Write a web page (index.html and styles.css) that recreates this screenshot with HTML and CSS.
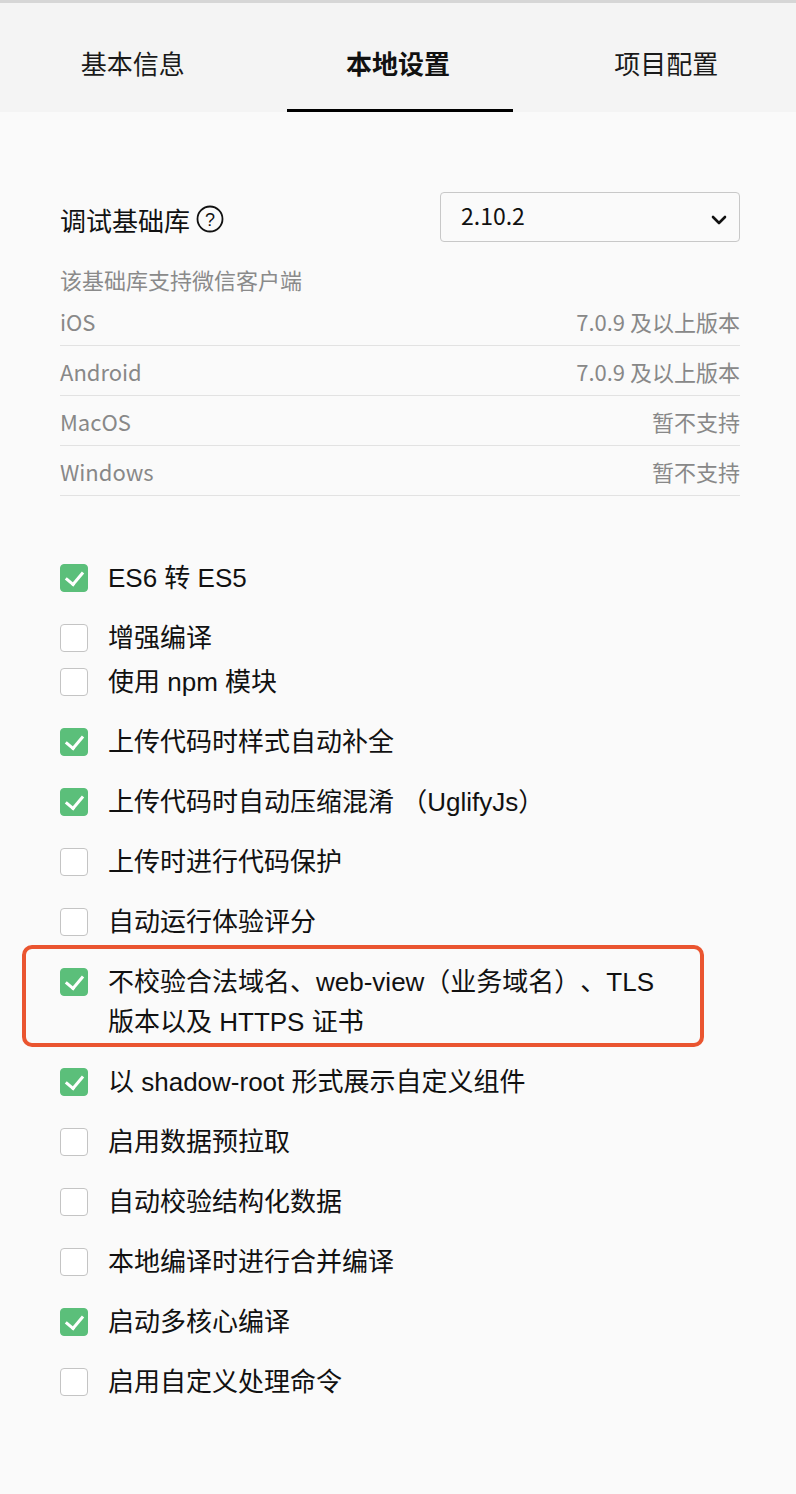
FILE: index.html
```html
<!DOCTYPE html>
<html lang="zh-CN">
<head>
<meta charset="utf-8">
<title>本地设置</title>
<link rel="stylesheet" href="styles.css">
</head>
<body>
<div class="page">
  <header class="tabs">
    <div class="tab">基本信息</div>
    <div class="tab active">本地设置</div>
    <div class="tab">项目配置</div>
  </header>

  <main class="content">
    <section class="lib">
      <div class="lib-head">
        <div class="lib-label">调试基础库
          <svg class="help" width="28" height="28" viewBox="0 0 28 28">
            <circle cx="14" cy="14" r="12.5" fill="none" stroke="#111" stroke-width="1.8"/>
            <text x="14" y="20.5" text-anchor="middle" font-size="18" font-family="Liberation Sans, sans-serif" fill="#111">?</text>
          </svg>
        </div>
        <div class="select">
          <span>2.10.2</span>
          <svg class="chev" width="16" height="10" viewBox="0 0 16 10">
            <path d="M2 2 L8 8 L14 2" fill="none" stroke="#111" stroke-width="2.6" stroke-linecap="round" stroke-linejoin="round"/>
          </svg>
        </div>
      </div>
      <div class="lib-sub">该基础库支持微信客户端</div>
      <div class="row"><span>iOS</span><span>7.0.9 及以上版本</span></div>
      <div class="row"><span>Android</span><span>7.0.9 及以上版本</span></div>
      <div class="row"><span>MacOS</span><span>暂不支持</span></div>
      <div class="row"><span>Windows</span><span>暂不支持</span></div>
    </section>

    <ul class="opts">
      <li class="opt on first"><i class="cb"></i><span>ES6 转 ES5</span></li>
      <li class="opt"><i class="cb"></i><span>增强编译</span></li>
      <li class="opt tight"><i class="cb"></i><span>使用 npm 模块</span></li>
      <li class="opt on"><i class="cb"></i><span>上传代码时样式自动补全</span></li>
      <li class="opt on"><i class="cb"></i><span>上传代码时自动压缩混淆 （UglifyJs）</span></li>
      <li class="opt"><i class="cb"></i><span>上传时进行代码保护</span></li>
      <li class="opt"><i class="cb"></i><span>自动运行体验评分</span></li>
      <li class="opt on marked"><i class="cb"></i><span>不校验合法域名、web-view（业务域名）、TLS<br>版本以及 HTTPS 证书</span></li>
      <li class="opt on"><i class="cb"></i><span>以 shadow-root 形式展示自定义组件</span></li>
      <li class="opt"><i class="cb"></i><span>启用数据预拉取</span></li>
      <li class="opt"><i class="cb"></i><span>自动校验结构化数据</span></li>
      <li class="opt"><i class="cb"></i><span>本地编译时进行合并编译</span></li>
      <li class="opt on"><i class="cb"></i><span>启动多核心编译</span></li>
      <li class="opt"><i class="cb"></i><span>启用自定义处理命令</span></li>
    </ul>
  </main>
</div>
</body>
</html>
```

FILE: styles.css
```css
* { box-sizing: border-box; }

html, body {
  margin: 0;
  padding: 0;
  background: #fafafa;
}

body {
  font-family: "Liberation Sans", "Noto Sans CJK SC", sans-serif;
  color: #111;
  text-spacing-trim: space-all;
}

.page {
  width: 796px;
  min-height: 1494px;
  background: #fafafa;
}

.tabs {
  display: grid;
  grid-template-columns: 1fr 1fr 1fr;
  height: 112px;
  background: #f4f4f4;
  border-top: 3px solid #d6d6d6;
}

.tab {
  display: flex;
  align-items: center;
  justify-content: center;
  font-family: "Noto Sans CJK SC", sans-serif;
  font-size: 26px;
  color: #1a1a1a;
  padding-top: 10px;
  position: relative;
}

.tab:last-child { padding-left: 6px; }

.tab.active {
  font-weight: 700;
  color: #111;
}

.tab.active::after {
  content: "";
  position: absolute;
  left: 22px;
  right: 18px;
  bottom: 0;
  height: 3px;
  background: #000;
}

.content {
  padding: 80px 56px 0 60px;
}

.lib-head {
  display: flex;
  align-items: center;
  justify-content: space-between;
  height: 50px;
}

.lib-label {
  display: flex;
  align-items: center;
  gap: 6px;
  font-family: "Noto Sans CJK SC", sans-serif;
  font-size: 26px;
  padding-top: 4px;
}

.help { display: block; }

.select {
  width: 300px;
  height: 50px;
  border: 1px solid #c8c8c8;
  border-radius: 4px;
  background: #fafafa;
  display: flex;
  align-items: center;
  justify-content: space-between;
  padding: 0 12px 0 20px;
  font-family: "Noto Sans CJK SC", sans-serif;
  font-size: 23px;
  color: #111;
}

.select span { padding-bottom: 4px; }

.chev { display: block; margin-top: 6px; }

.lib-sub {
  font-family: "Noto Sans CJK SC", sans-serif;
  font-size: 22px;
  color: #8a8a8a;
  margin-top: 22px;
  line-height: 30px;
}

.row {
  display: flex;
  justify-content: space-between;
  align-items: center;
  height: 50px;
  border-bottom: 1px solid #e2e2e2;
  font-family: "Noto Sans CJK SC", sans-serif;
  font-size: 22px;
  color: #888;
}

.lib-sub + .row { height: 52px; padding-top: 2px; }

.opts {
  list-style: none;
  margin: 62px 0 0 0;
  padding: 0;
}

.opt {
  display: flex;
  align-items: flex-start;
  gap: 20px;
  margin-top: 20px;
  font-size: 26px;
  line-height: 40px;
  color: #111;
}

.opt.first { margin-top: 0; }
.opt.tight { margin-top: 4px; }

.cb {
  flex: none;
  width: 28px;
  height: 28px;
  margin-top: 6px;
  border: 1px solid #c4c4c4;
  border-radius: 4px;
  background: #fff;
  position: relative;
}

.opt.on .cb {
  background: #5bbf7a;
  border-color: #5bbf7a;
}

.opt.on .cb::after {
  content: "";
  position: absolute;
  left: 8px;
  top: 3px;
  width: 8px;
  height: 14px;
  border-right: 3px solid #fff;
  border-bottom: 3px solid #fff;
  transform: rotate(40deg);
}

.opt.marked { position: relative; }

.opt.marked::before {
  content: "";
  position: absolute;
  left: -38px;
  right: 36px;
  top: -17px;
  bottom: -5px;
  border: 4px solid #ea5530;
  border-radius: 10px;
  pointer-events: none;
}
```
